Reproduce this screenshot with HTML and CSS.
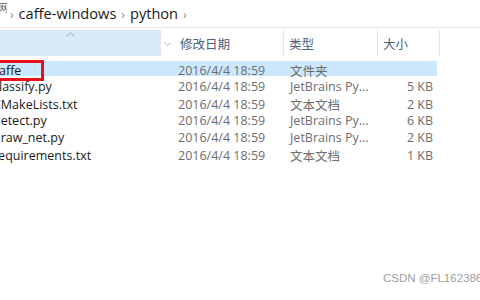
FILE: index.html
```html
<!DOCTYPE html>
<html lang="zh-CN">
<head>
  <meta charset="UTF-8">
  <title>python</title>
  <link rel="stylesheet" href="styles.css">
</head>
<body>
  <div class="crumbs">
    <span class="net-icon">网</span>
    <span class="chev">›</span>
    <span class="crumb">caffe-windows</span>
    <span class="chev">›</span>
    <span class="crumb">python</span>
    <span class="chev">›</span>
  </div>

  <div class="list">
    <div class="head">
      <div class="hcell name-head">
        <svg class="caret" width="9" height="5" viewBox="0 0 9 5"><path d="M0.5 4.5 L4.5 0.8 L8.5 4.5" fill="none" stroke="#97a4b3" stroke-width="1"/></svg>
      </div>
      <div class="hcell date-head">
        <svg class="drop" width="7" height="4" viewBox="0 0 7 4"><path d="M0.5 0.5 L3.5 3.5 L6.5 0.5" fill="none" stroke="#a8b4c0" stroke-width="1"/></svg>
        <span>修改日期</span>
      </div>
      <div class="hcell"><span>类型</span></div>
      <div class="hcell"><span>大小</span></div>
    </div>

    <div class="row selected">
      <div class="cell name"><span class="picked">caffe</span></div>
      <div class="cell">2016/4/4 18:59</div>
      <div class="cell">文件夹</div>
      <div class="cell size"></div>
    </div>
    <div class="row">
      <div class="cell name">classify.py</div>
      <div class="cell">2016/4/4 18:59</div>
      <div class="cell">JetBrains Py...</div>
      <div class="cell size">5 KB</div>
    </div>
    <div class="row">
      <div class="cell name">CMakeLists.txt</div>
      <div class="cell">2016/4/4 18:59</div>
      <div class="cell">文本文档</div>
      <div class="cell size">2 KB</div>
    </div>
    <div class="row">
      <div class="cell name">detect.py</div>
      <div class="cell">2016/4/4 18:59</div>
      <div class="cell">JetBrains Py...</div>
      <div class="cell size">6 KB</div>
    </div>
    <div class="row">
      <div class="cell name">draw_net.py</div>
      <div class="cell">2016/4/4 18:59</div>
      <div class="cell">JetBrains Py...</div>
      <div class="cell size">2 KB</div>
    </div>
    <div class="row">
      <div class="cell name">requirements.txt</div>
      <div class="cell">2016/4/4 18:59</div>
      <div class="cell">文本文档</div>
      <div class="cell size">1 KB</div>
    </div>
  </div>

  <div class="mark">CSDN @FL162386</div>
</body>
</html>
```

FILE: styles.css
```css
body {
  margin: 0;
  width: 480px;
  height: 300px;
  overflow: hidden;
  background-color: #fff;
  font-family: "Open Sans", "Noto Sans", "Noto Sans CJK SC", sans-serif;
  position: relative;
}

/* Address bar */
.crumbs {
  height: 26px;
  display: flex;
  align-items: center;
  border-bottom: 1px solid #e5e5e5;
  padding-bottom: 1px;
}

.net-icon {
  font-family: "Noto Sans CJK SC", sans-serif;
  font-size: 11px;
  color: #555;
  margin-left: -2px;
  margin-top: -12px;
  width: 9px;
  overflow: hidden;
}

.chev {
  color: #8a8a8a;
  font-size: 12px;
  margin: 3px 5px 0 3px;
}

.crumb {
  font-size: 14.6px;
  color: #1a1a1a;
  margin-right: 2px;
}

/* Details list */
.list {
  margin-top: 2px;
}

.head,
.row {
  display: grid;
  grid-template-columns: 161px 123px 94px 62px;
}

.head {
  height: 26px;
}

.hcell {
  display: flex;
  align-items: center;
  border-right: 1px solid #e5e5e5;
  padding-left: 5px;
  font-family: "Noto Sans CJK SC", sans-serif;
  font-size: 12.5px;
  color: #4d6079;
}

.name-head {
  background-color: #d9ebf9;
  position: relative;
}

.caret {
  position: absolute;
  left: 66px;
  top: 2px;
}

.date-head {
  padding-left: 3px;
}

.drop {
  margin-right: 9px;
  margin-top: 2px;
}

.row {
  height: 17px;
  align-items: center;
  font-size: 12.5px;
  color: #6d6d6d;
}

.selected {
  background-color: #cce8ff;
  width: 437px;
  height: 15px;
  margin-bottom: 2px;
  margin-top: 5px;
}

.cell {
  white-space: nowrap;
}

.cell:nth-child(2) {
  padding-left: 17px;
}

.cell:nth-child(3) {
  padding-left: 6px;
}

.name {
  color: #1a1a1a;
  margin-left: -7px;
}

.size {
  text-align: right;
  padding-right: 7px;
}

.picked {
  position: relative;
}

.picked::after {
  content: "";
  position: absolute;
  left: -1px;
  top: -2px;
  width: 46px;
  height: 15px;
  border: 3px solid #e8101a;
}

.mark {
  position: absolute;
  left: 383px;
  top: 272px;
  font-family: "Liberation Sans", sans-serif;
  font-size: 11.5px;
  color: #a0a0a0;
  white-space: nowrap;
}
```
